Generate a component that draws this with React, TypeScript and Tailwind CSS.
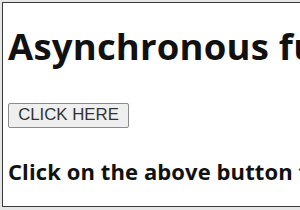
export default function App() {
  return (
    <div className="h-[210px] w-[300px] overflow-hidden bg-[#e6e6e6] pl-[2px] pt-[2px]">
      <div className="flex h-[205px] w-[340px] flex-col items-start overflow-hidden whitespace-nowrap border border-[#3a3a3a] bg-white pl-[5px] pt-[20px]">
        <h1 className="font-['Open_Sans',sans-serif] text-[36.5px] font-bold leading-[46px] tracking-[0.2px] text-[#111]">
          Asynchronous function
        </h1>
        <button className="mt-[34px] h-[25px] w-[121px] rounded-[2px] border border-[#8a8a8a] bg-[#efefef] font-['Liberation_Sans',Arial,sans-serif] text-[16.8px] leading-none text-[#333]">
          CLICK HERE
        </button>
        <p className="mt-[30px] font-['Open_Sans',sans-serif] text-[22px] font-bold leading-[26px] tracking-[0.1px] text-[#111]">
          Click on the above button to call
        </p>
      </div>
    </div>
  );
}
